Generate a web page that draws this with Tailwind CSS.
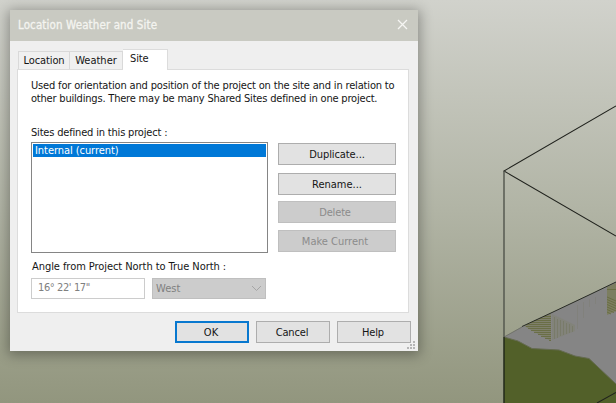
<!DOCTYPE html>
<html lang="en">
<head>
<meta charset="utf-8">
<title>Location Weather and Site</title>
<script src="https://cdn.jsdelivr.net/npm/@tailwindcss/browser@4"></script>
</head>
<body class="relative h-[403px] w-[616px] overflow-hidden bg-linear-to-b from-[#d1d2cc] via-[#b1b4a5] via-52% to-[#92967e] font-['DejaVu_Sans_Condensed','DejaVu_Sans',sans-serif] text-[11px] leading-[13px] text-[#151515]">
  <svg class="absolute inset-0" width="616" height="403" viewBox="0 0 616 403" fill="none">
    <path d="M504 337L522 326.500L552 312.500L616 282V403H504Z" fill="#858585"/>
    <path d="M504 337L518 341L532 348.500L559 350L575 356L589 358.500L616 384V403H504Z" fill="#526029"/>
    <path d="M504 337L518 341L532 348.500L559 350L575 356L589 358.500L616 384" stroke="#656b51"/>
    <path d="M524 326L551 313V341Z" fill="#7f806c"/>
    <path d="M552 314L575 325V331L552 340Z" fill="#80816f" opacity=".5"/>
    <path d="M607 287L616 283V311L607 315Z" fill="#7c7e60"/>
    <g stroke="#65693c" stroke-width=".8">
      <path d="M543 316.500H551M539 318.500H551M534 320.500H551M530 322.500H551M527 324.500H551M526 326.500H551M528 328.500H551M531 330.500H551M534 332.500H551M538 334.500H551M541 336.500H551M545 338.500H551M549 340.500H551"/>
      <path d="M607 289.500H616M607 297L616 301M607 299.500L616 303.500M607 302L616 306M607 304.500L616 308.500M607 307L616 311M607 309.500L614 312.500M607 312L611 314"/>
    </g>
    <path d="M554.500 317V339M557.500 319V338M560.500 320V336M563.500 321V335M566.500 323V334M569.500 324V333M572.500 326V332" stroke="#74765f" stroke-width=".6"/>
    <path d="M577.500 305V329M583.500 302V318M589.500 299V307M595.500 297V304" stroke="#7d7d75" stroke-width=".6"/>
    <path d="M504 337L522 327" stroke="#696c62" stroke-width=".8"/>
    <path d="M522 326.500L552 312.500L590 294.500L616 282" stroke="#282b24"/>
    <path d="M616 106L504 171L616 236M597 403L616 392.500" stroke="#20221d" stroke-width="1.050"/>
    <path d="M504 171V337" stroke="#50534b" stroke-width="1.400"/>
    <path d="M504 337V403" stroke="#22291a" stroke-width="1.500"/>
  </svg>

  <main class="absolute left-[10px] top-[10px] flex h-[341px] w-[408px] flex-col bg-[#efefef] shadow-[0_2px_12px_2px_#00000052]">
    <header class="flex h-[31px] shrink-0 items-center justify-between bg-[#c9cac2] pl-[8px] pr-[10px] text-[#f4f4f0]">
      <h1 class="whitespace-nowrap text-[11.500px] tracking-[0.110px] [-webkit-text-stroke:0.300px_#f4f4f0]">Location Weather and Site</h1>
      <svg width="11" height="11" viewBox="0 0 11 11" class="-mt-[2px]"><path d="M1 1L10 10M10 1L1 10" stroke="#f6f6f3" stroke-width="1.300"/></svg>
    </header>
    <nav class="flex h-[28px] shrink-0 items-end pl-[8px]">
      <div class="flex h-[18px] w-[52px] items-center justify-center border border-b-0 border-[#d9d9d9] bg-[#f0f0f0] tracking-[-0.100px]">Location</div>
      <div class="flex h-[18px] w-[53px] items-center justify-center border border-b-0 border-l-0 border-[#d9d9d9] bg-[#f0f0f0]">Weather</div>
      <div class="relative -mb-px flex h-[21px] w-[45px] border border-b-0 border-l-0 border-[#dcdcdc] bg-white pl-[7px] pt-[2px] tracking-[-0.150px]">Site</div>
    </nav>
    <section class="ml-[7px] flex h-[244px] w-[392px] shrink-0 flex-col border border-[#dcdcdc] bg-white pl-[13px]">
      <p class="mt-[9px] whitespace-nowrap"><span class="tracking-[-0.160px]">Used for orientation and position of the project on the site and in relation to</span><br><span class="tracking-[-0.195px]">other buildings. There may be many Shared Sites defined in one project.</span></p>
      <h2 class="mt-[21px] h-[13px] tracking-[-0.180px]">Sites defined in this project :</h2>
      <div class="mt-[3px] flex gap-[10px]">
        <div class="h-[111px] w-[237px] border border-[#858585] bg-white p-px">
          <div class="h-[13px] bg-[#0078d7] pl-[2px] tracking-[-0.060px] text-white">Internal (current)</div>
        </div>
        <div class="mt-px w-[118px]">
          <button class="block h-[22px] w-full border border-[#adadad] bg-[#e2e2e2] tracking-[-0.080px]">Duplicate...</button>
          <button class="mt-[8px] block h-[22px] w-full border border-[#adadad] bg-[#e2e2e2]">Rename...</button>
          <button class="mt-[6px] block h-[22px] w-full border border-[#bfbfbf] bg-[#cccccc] pr-[4px] tracking-[-0.150px] text-[#8b8b8b]">Delete</button>
          <button class="mt-[7px] block h-[22px] w-full border border-[#bfbfbf] bg-[#cccccc] pr-[4px] text-[#8b8b8b]">Make Current</button>
        </div>
      </div>
      <h2 class="mt-[7px] h-[13px] pl-px tracking-[-0.060px]">Angle from Project North to True North :</h2>
      <div class="mt-[5px] flex gap-[7px] text-[#808080]">
        <div class="h-[21px] w-[114px] border border-[#cccccc] bg-white pl-[6px] pt-[2px] tracking-[-0.400px]">16° 22' 17"</div>
        <div class="flex h-[21px] w-[114px] items-center justify-between border border-[#bfbfbf] bg-[#cccccc] pl-[3px] pr-[3px]">West
          <svg width="11" height="7" viewBox="0 0 11 7" fill="none"><path d="M1 1L5.500 5.500L10 1" stroke="#a5a5a5"/></svg>
        </div>
      </div>
    </section>
    <footer class="mt-[8px] flex pl-[165px]">
      <button class="h-[22px] w-[74px] border-2 border-[#0878cf] bg-[#e2e2e2] pr-[2px]">OK</button>
      <button class="ml-[7px] h-[22px] w-[74px] border border-[#adadad] bg-[#e2e2e2] pr-[2px] tracking-[-0.150px]">Cancel</button>
      <button class="ml-[7px] h-[22px] w-[74px] border border-[#adadad] bg-[#e2e2e2] pr-[2px] tracking-[-0.150px]">Help</button>
    </footer>
    <svg class="absolute bottom-[1px] right-[2px]" width="9" height="9" viewBox="0 0 9 9" fill="#b5b5b5"><path d="M6 0h2v2H6zM3 3h2v2H3zM6 3h2v2H6zM0 6h2v2H0zM3 6h2v2H3zM6 6h2v2H6z"/></svg>
  </main>
</body>
</html>
